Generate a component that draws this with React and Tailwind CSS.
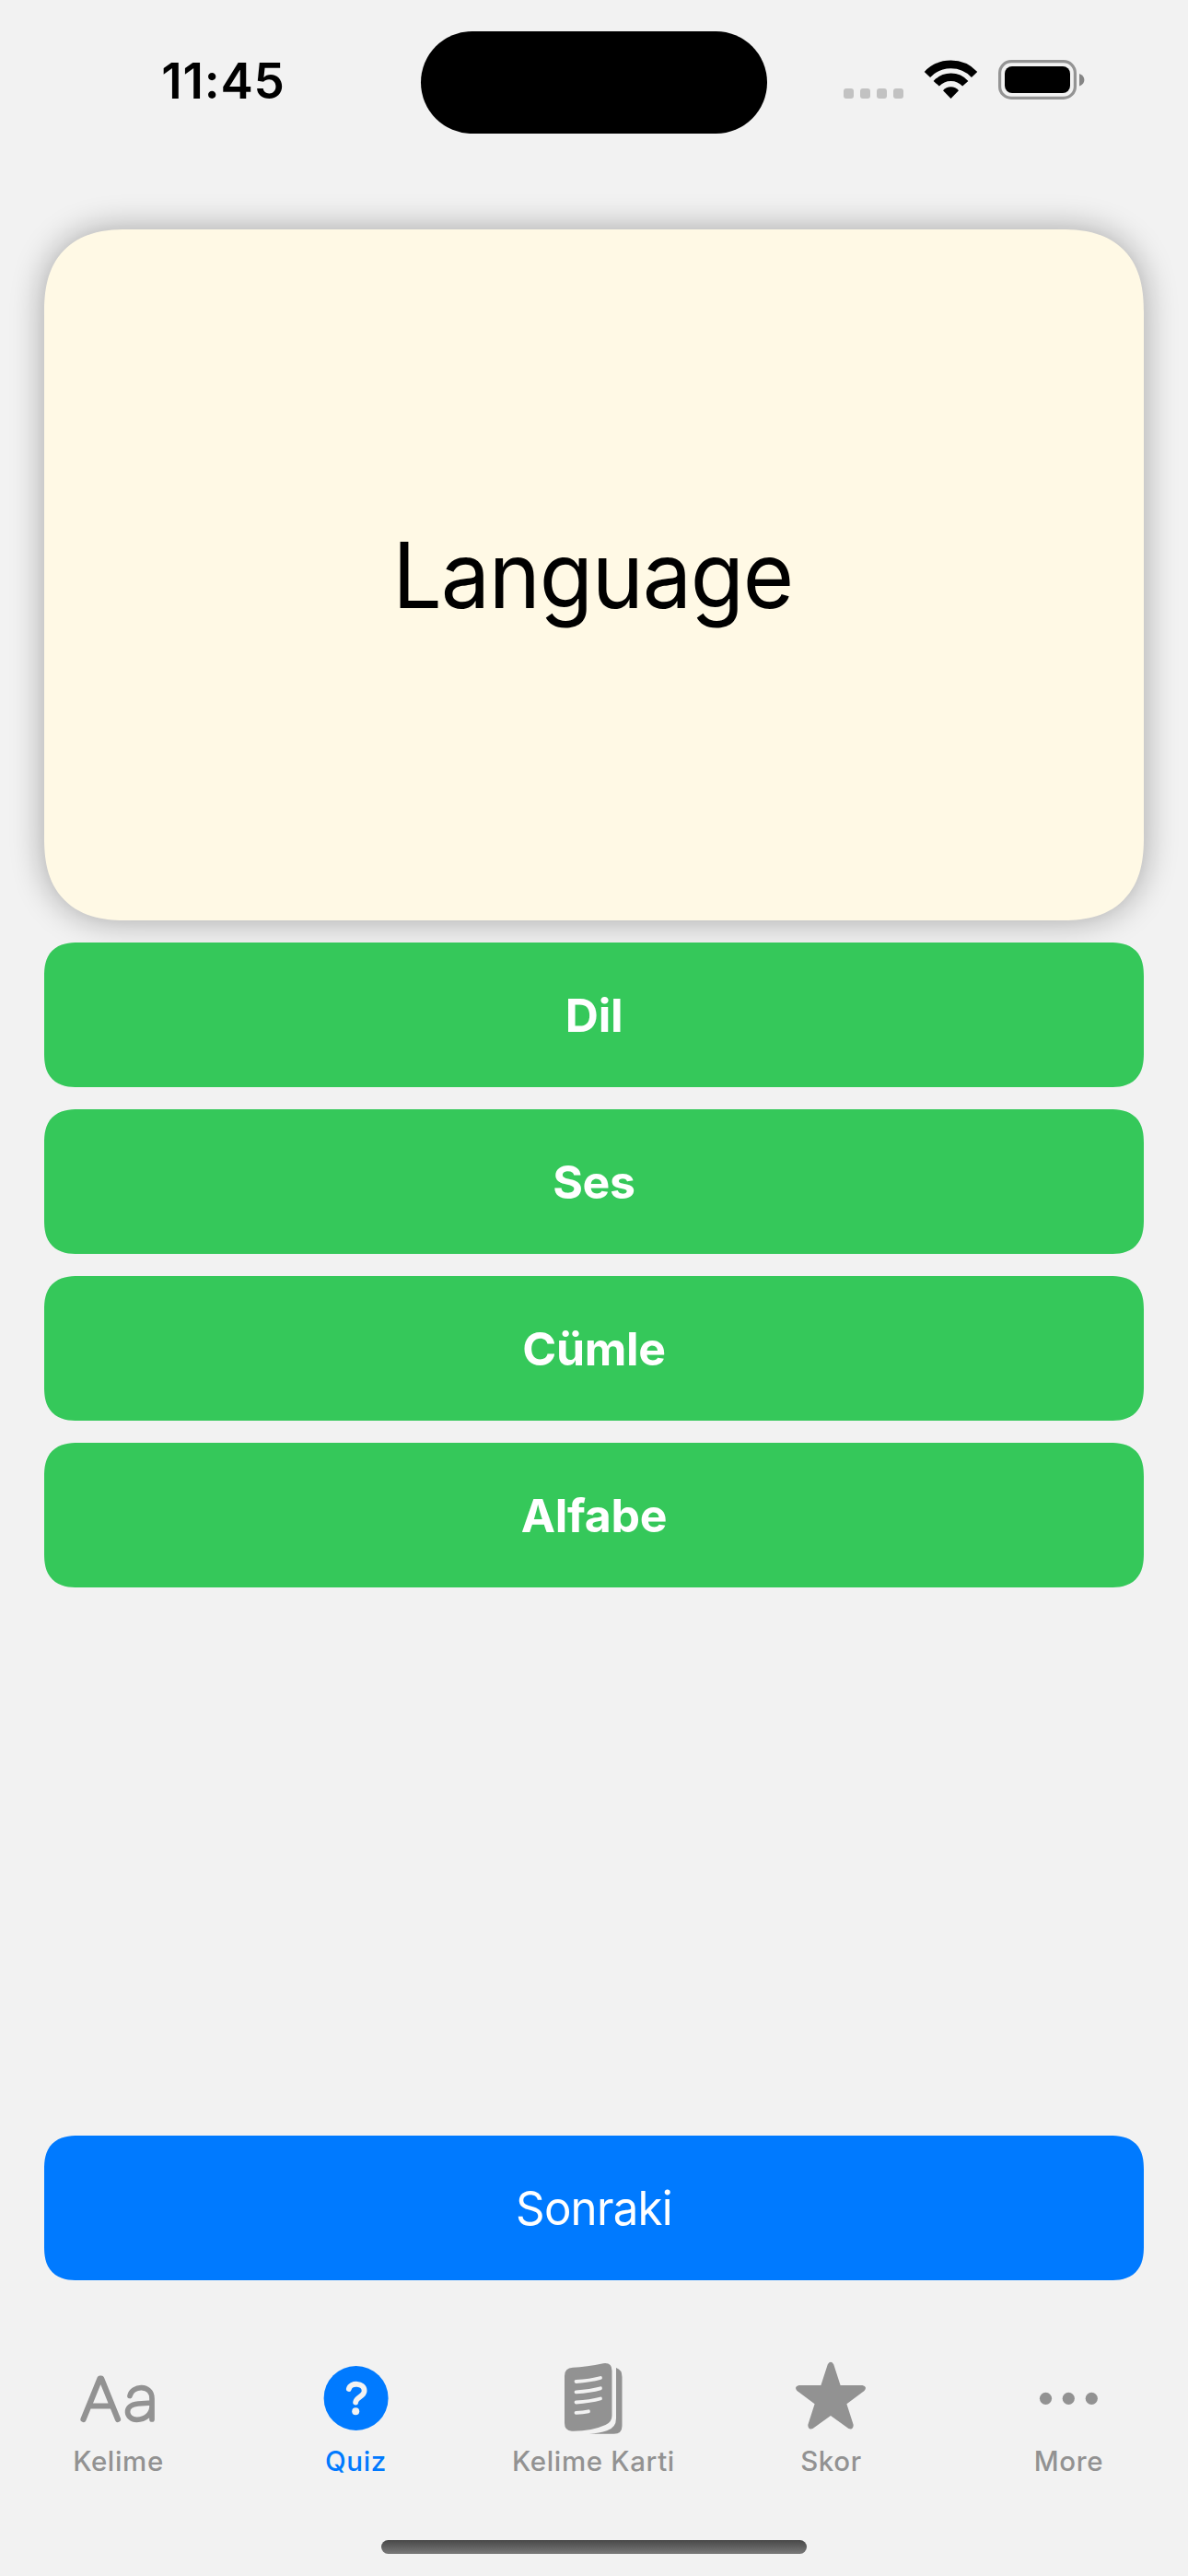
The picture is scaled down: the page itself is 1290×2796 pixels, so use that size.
const answers = ['Dil', 'Ses', 'Cümle', 'Alfabe'];

function StatusBar() {
  return (
    <header className="flex h-[177px] items-start">
      <div className="flex w-[457px] justify-center pt-[56px] pl-[28px]">
        <span className="text-[53px] leading-[64px] font-semibold tracking-[0.8px]">11:45</span>
      </div>
      <div className="mt-[33.5px] h-[111px] w-[376px] shrink-0 rounded-full bg-black" />
      <div className="flex flex-1 items-start pt-[65px] pl-[83px]">
        <div className="mt-[31px] flex gap-[7px]">
          {[0, 1, 2, 3].map((i) => (
            <span key={i} className="h-[11px] w-[11px] rounded-[3px] bg-[#c2c2c2]" />
          ))}
        </div>
        <svg className="ml-[22px] h-[43px] w-[60px] shrink-0" viewBox="0 0 60 43" fill="none">
          <path d="M3.9 15.9 A35.2 35.2 0 0 1 55.1 15.9" stroke="#000" strokeWidth="8.7" />
          <path d="M13.75 25.8 A21.2 21.2 0 0 1 45.25 25.8" stroke="#000" strokeWidth="8.4" />
          <path d="M21 33.3 A10.9 10.9 0 0 1 38 33.3 L29.5 42 Z" fill="#000" />
        </svg>
        <svg className="ml-[21px] h-[43px] w-[95px] shrink-0" viewBox="0 0 95 43">
          <rect x="1.6" y="1.6" width="81.8" height="39.8" rx="12.5" fill="none" stroke="#949494" strokeWidth="3.2" />
          <rect x="7" y="7" width="71" height="29" rx="8" fill="#000" />
          <path d="M88 15 C95.2 17.5 95.2 26 88 28.5 Z" fill="#858585" />
        </svg>
      </div>
    </header>
  );
}

function Tab({ label, active, children }) {
  return (
    <button className={`flex w-[258px] shrink-0 flex-col items-center ${active ? 'text-[#007aff]' : 'text-[#929292]'}`}>
      <span className="flex h-[90px] items-center justify-center">{children}</span>
      <span className="mt-[5px] pl-[1px] text-[29.5px] leading-[36px] font-medium tracking-[0.65px] whitespace-nowrap">{label}</span>
    </button>
  );
}

function TabBar() {
  return (
    <nav className="-ml-px flex h-[180px] items-start">
      <Tab label="Kelime">
        <svg className="h-[90px] w-[90px]" viewBox="0 0 90 90" fill="none" stroke="currentColor" strokeLinecap="round" strokeLinejoin="round">
          <path d="M7.5 68 L25.6 23.5 H27 L45 68 M14 53.5 H38" strokeWidth="6.2" />
          <path d="M58 42.5 C60 31 82 29.500 82 45.500 V68 M82 50 L67 51 C50 52.500 54 68.300 65.500 68.300 C75 68.300 82 62 82 54" strokeWidth="5.7" />
        </svg>
      </Tab>
      <Tab label="Quiz" active>
        <svg className="h-[90px] w-[90px]" viewBox="0 0 90 90">
          <circle cx="45.6" cy="45" r="35" fill="currentColor" />
          <path d="M37.8 35 C39.5 27.500 54.600 28 54.600 37 C54.600 43.500 45.400 43.500 45.100 49.500" fill="none" stroke="#f2f2f2" strokeWidth="5.8" strokeLinecap="round" />
          <circle cx="45.2" cy="59.3" r="4" fill="#f2f2f2" />
        </svg>
      </Tab>
      <Tab label="Kelime Karti">
        <svg className="h-[90px] w-[90px]" viewBox="0 0 90 90">
          <path d="M14 21 Q14 12 23 11.8 Q38 11 56 7.2 Q65.5 6 65.5 15 V64 Q65.5 71 58.5 74 Q43 81 22 80.7 Q14 80.5 14 72 Z" fill="currentColor" />
          <path d="M70 12 Q76.5 14 76.5 22 V75 Q76.5 83.8 67.5 83.8 H41 Q52 82.8 60 80.3 Q70 77 70 67 Z" fill="currentColor" />
          <g fill="none" stroke="#f2f2f2" strokeWidth="3.8" strokeLinecap="round">
            <path d="M26.5 27 Q42 26 53 23" />
            <path d="M26.5 38.3 Q42 37.3 53 34.3" />
            <path d="M26.5 49.5 Q42 48.5 53 45.5" />
            <path d="M26.5 60.8 Q34 60.5 40 59.3" />
          </g>
        </svg>
      </Tab>
      <Tab label="Skor">
        <svg className="h-[90px] w-[90px]" viewBox="0 0 90 90">
          <path d="M41.8 8.2 Q45 3.5 48.2 8.2 L55.6 31 H79.5 Q85.3 32.5 81.5 37 L62.4 51.3 L69.7 74 Q69.5 79.8 64.5 78 L45 64 L25.5 78 Q20.5 79.8 20.3 74 L27.6 51.3 L8.5 37 Q4.7 32.5 10.5 31 H34.4 Z" fill="currentColor" />
        </svg>
      </Tab>
      <Tab label="More">
        <svg className="h-[90px] w-[90px]" viewBox="0 0 90 90" fill="currentColor">
          <circle cx="20.500" cy="45.300" r="6.600" />
          <circle cx="45.300" cy="45.300" r="6.600" />
          <circle cx="70.300" cy="45.300" r="6.600" />
        </svg>
      </Tab>
    </nav>
  );
}

export default function App() {
  return (
    <div className="flex h-[2796px] w-[1290px] flex-col bg-[#f2f2f2] font-['Inter',sans-serif] text-black">
      <StatusBar />
      <main className="flex flex-1 flex-col px-12 pt-[72px]">
        <section className="flex h-[750px] items-center justify-center rounded-[75px] bg-[#fff9e5] shadow-[0_0_36px_rgba(0,0,0,0.33)] supports-[corner-shape:squircle]:rounded-[90px] supports-[corner-shape:squircle]:[corner-shape:superellipse(1.3)]">
          <h1 className="scale-x-[0.96] pr-[4px] text-[99px] leading-[120px] font-normal tracking-[-1.3px]">Language</h1>
        </section>
        <div className="mt-6 flex flex-col gap-6">
          {answers.map((answer) => (
            <button
              key={answer}
              className="flex h-[157px] items-center justify-center rounded-[30px] bg-[#35c85a] text-[50px] leading-[60px] font-bold tracking-[-0.3px] text-white supports-[corner-shape:squircle]:rounded-[37px] supports-[corner-shape:squircle]:[corner-shape:superellipse(1.35)]"
            >
              {answer}
            </button>
          ))}
        </div>
        <button className="mt-auto mb-[83px] flex h-[157px] items-center justify-center rounded-[30px] bg-[#007aff] text-[51px] leading-[60px] font-normal text-white supports-[corner-shape:squircle]:rounded-[37px] supports-[corner-shape:squircle]:[corner-shape:superellipse(1.35)]">
          <span className="scale-x-[0.965] tracking-[-0.8px]">Sonraki</span>
        </button>
      </main>
      <TabBar />
      <div className="flex h-[58px] justify-center pt-[19px]">
        <div className="h-[15px] w-[462px] rounded-full bg-linear-to-b from-[#484848] to-[#7a7a7a]" />
      </div>
    </div>
  );
}
